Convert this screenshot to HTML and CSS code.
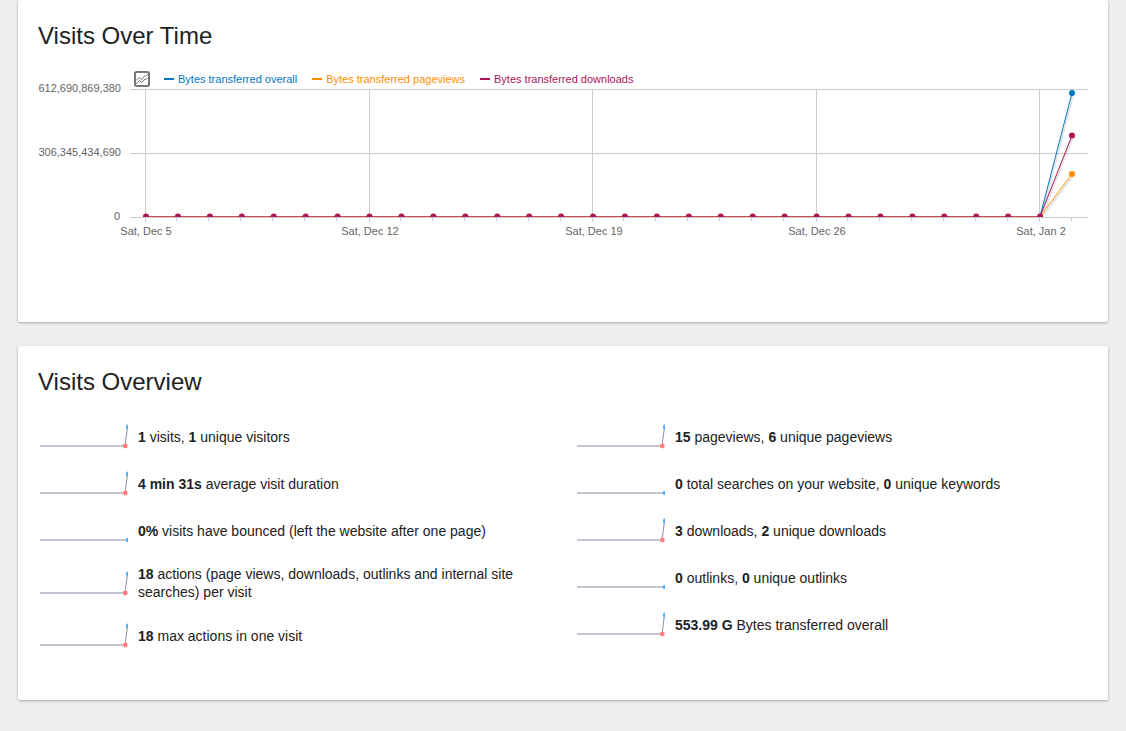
FILE: index.html
```html
<!DOCTYPE html>
<html lang="en">
<head>
<meta charset="utf-8">
<title>Visits</title>
<link rel="stylesheet" href="styles.css">
</head>
<body>
<main class="page">
  <section class="card card-chart">
    <h2 class="title">Visits Over Time</h2>
    <div class="legend">
      <button class="picker" type="button" aria-label="Choose metrics">
        <svg width="16" height="16" viewBox="0 0 16 16" fill="none">
          <rect x="1" y="1" width="14" height="14" rx="1.500" stroke="#777" stroke-width="2"/>
          <path d="M2 9.500 5 6.500 7.500 8.500 10.500 5 11.500 5.500 14 3" stroke="#777"/>
          <path d="M2 13 5.500 9.500 8 11.500 11 8 12 8.500 14 6.500" stroke="#777"/>
        </svg>
      </button>
      <span class="series overall">Bytes transferred overall</span>
      <span class="series pageviews">Bytes transferred pageviews</span>
      <span class="series downloads">Bytes transferred downloads</span>
    </div>
    <svg class="chart" id="chart" viewBox="0 0 1050 154" role="img" aria-label="Bytes transferred by day">
      <defs>
        <clipPath id="plot"><rect x="92" y="-4" width="958" height="133"/></clipPath>
      </defs>
      <path class="grid" d="M92 1.500H1050M92 65.500H1050M92 129.500H1050M107.500 1V134M331.500 1V134M554.500 1V134M778.500 1V134M1001.500 1V134"/>
      <path class="grid" id="ticks"/>
      <g clip-path="url(#plot)" id="data">
        <path class="shade" d="M1003 130 1035 7M1003 130 1035 49M1003 130 1035 88"/>
        <path class="line-overall" d="M108 128.500H1002L1034 5"/>
        <path class="line-pageviews" d="M108 128.500H1002L1034 86"/>
        <path class="line-downloads" d="M1002 128.500 1034 47.500"/>
        <path class="line-base" d="M108 128.500H1002"/>
        <circle class="dot-overall" cx="1034" cy="5" r="3"/>
        <circle class="dot-pageviews" cx="1034" cy="86" r="3"/>
        <circle class="dot-downloads" cx="1034" cy="47.500" r="3"/>
      </g>
      <g class="axis-y">
        <text x="83" y="4">612,690,869,380</text>
        <text x="83" y="68">306,345,434,690</text>
        <text x="82" y="132">0</text>
      </g>
      <g class="axis-x">
        <text x="108" y="147">Sat, Dec 5</text>
        <text x="332" y="147">Sat, Dec 12</text>
        <text x="556" y="147">Sat, Dec 19</text>
        <text x="779" y="147">Sat, Dec 26</text>
        <text x="1003" y="147">Sat, Jan 2</text>
      </g>
    </svg>
  </section>

  <section class="card card-overview">
    <h2 class="title">Visits Overview</h2>
    <svg class="defs" width="0" height="0" aria-hidden="true">
      <symbol id="rise" viewBox="0 0 90 25">
        <path d="M2 22H87" stroke="#c1c7d1" stroke-width="2"/>
        <path d="M87 22 89.500 3" stroke="#8793a5" stroke-width="1"/>
        <circle cx="87.300" cy="22" r="2.400" fill="#ff7f7f"/>
        <ellipse cx="89.500" cy="3" rx="1.600" ry="2.500" fill="#55aaff"/>
      </symbol>
      <symbol id="flat" viewBox="0 0 90 25">
        <path d="M2 22H89" stroke="#c1c7d1" stroke-width="2"/>
        <circle cx="90" cy="22" r="2.300" fill="#55aaff"/>
      </symbol>
    </svg>
    <div class="columns">
      <div class="column">
        <div class="metric"><svg class="spark"><use href="#rise"/></svg><div><strong>1</strong> visits, <strong>1</strong> unique visitors</div></div>
        <div class="metric"><svg class="spark"><use href="#rise"/></svg><div><strong>4 min 31s</strong> average visit duration</div></div>
        <div class="metric"><svg class="spark"><use href="#flat"/></svg><div><strong>0%</strong> visits have bounced (left the website after one page)</div></div>
        <div class="metric"><svg class="spark"><use href="#rise"/></svg><div><strong>18</strong> actions (page views, downloads, outlinks and internal site searches) per visit</div></div>
        <div class="metric"><svg class="spark"><use href="#rise"/></svg><div><strong>18</strong> max actions in one visit</div></div>
      </div>
      <div class="column">
        <div class="metric"><svg class="spark"><use href="#rise"/></svg><div><strong>15</strong> pageviews, <strong>6</strong> unique pageviews</div></div>
        <div class="metric"><svg class="spark"><use href="#flat"/></svg><div><strong>0</strong> total searches on your website, <strong>0</strong> unique keywords</div></div>
        <div class="metric"><svg class="spark"><use href="#rise"/></svg><div><strong>3</strong> downloads, <strong>2</strong> unique downloads</div></div>
        <div class="metric"><svg class="spark"><use href="#flat"/></svg><div><strong>0</strong> outlinks, <strong>0</strong> unique outlinks</div></div>
        <div class="metric"><svg class="spark"><use href="#rise"/></svg><div><strong>553.99 G</strong> Bytes transferred overall</div></div>
      </div>
    </div>
  </section>
</main>
<script src="chart.js"></script>
</body>
</html>
```

FILE: styles.css
```css
body {
  margin: 0;
  background: #eeeff1;
  color: #212121;
  font: 14px/18px "Liberation Sans", Arial, sans-serif;
}
.page {
  display: flex;
  flex-direction: column;
  gap: 24px;
  padding: 0 18px 31px;
}
.card {
  background: #fff;
  border-radius: 2px;
  box-shadow: 0 1px 3px rgba(0, 0, 0, .3);
}
.card-chart { padding: 20px 20px 80px; }
.card-overview { padding: 20px 20px 41px; }
.title {
  margin: 0;
  font-size: 24px;
  line-height: 32px;
  font-weight: 400;
}
.legend {
  display: flex;
  align-items: center;
  height: 18px;
  margin-top: 18px;
  padding-left: 96px;
  font-size: 11px;
}
.picker {
  display: flex;
  margin-right: 14px;
  padding: 0;
  border: 0;
  background: none;
  cursor: pointer;
}
.series {
  display: flex;
  align-items: center;
  gap: 4px;
  margin-right: 15px;
}
.series::before {
  content: "";
  width: 10px;
  height: 2px;
  background: currentColor;
}
.overall { color: #0277bd; }
.pageviews { color: #ff8f00; }
.downloads { color: #ad1457; }
.chart {
  display: block;
  width: 100%;
  overflow: visible;
  fill: none;
}
.grid { stroke: #ccc; }
.shade { stroke: #000; stroke-opacity: .1; stroke-width: 2; }
.line-overall { stroke: #0277bd; }
.line-pageviews { stroke: #ff8f00; }
.line-downloads { stroke: #ad1457; }
.line-base { stroke: #c45050; }
.dot-overall { fill: #0277bd; }
.dot-pageviews { fill: #ff8f00; }
.dot-downloads { fill: #ad1457; }
.axis-y, .axis-x { fill: #666; font-size: 11px; }
.axis-y { text-anchor: end; }
.axis-x { text-anchor: middle; }
.defs { display: block; }
.columns {
  display: grid;
  grid-template-columns: 1fr 1fr;
  column-gap: 24px;
  margin-top: 15px;
}
.metric {
  display: flex;
  align-items: center;
  gap: 10px;
  padding: 11px 0;
}
.spark {
  flex: none;
  width: 90px;
  height: 25px;
  fill: none;
}
```

FILE: chart.js
```js
const svgNs = "http://www.w3.org/2000/svg";
const data = document.getElementById("data");
const start = 108;
const days = 29;
const step = (1034 - start) / days;
let ticks = "";

for (let day = 0; day <= days; day++) {
  const x = start + day * step;
  if (day % 7) ticks += `M${Math.floor(x) - 0.5} 130v3`;
  if (day < days) {
    const dot = document.createElementNS(svgNs, "circle");
    dot.setAttribute("class", "dot-downloads");
    dot.setAttribute("cx", x);
    dot.setAttribute("cy", 128.5);
    dot.setAttribute("r", 3);
    data.appendChild(dot);
  }
}
document.getElementById("ticks").setAttribute("d", ticks);
```
